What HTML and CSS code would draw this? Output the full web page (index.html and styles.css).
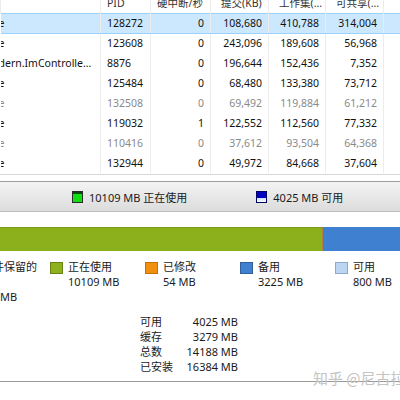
FILE: index.html
```html
<!DOCTYPE html>
<html>
	<head>
		<meta charset="UTF-8">
		<title>资源监视器 - 内存</title>
		<link rel="stylesheet" href="styles.css">
	</head>
	<body>
		<div class="procs">
			<table class="grid">
				<colgroup>
					<col class="c-name"><col class="c-pid"><col class="c-irq"><col class="c-commit"><col class="c-ws"><col class="c-share"><col>
				</colgroup>
				<thead>
					<tr><th></th><th class="l">PID</th><th class="l">硬中断/秒</th><th>提交(KB)</th><th>工作集(...</th><th>可共享(...</th><th></th></tr>
				</thead>
				<tbody>
					<tr class="sel"><td class="name">e</td><td class="l">128272</td><td>0</td><td>108,680</td><td>410,788</td><td>314,004</td><td></td></tr>
					<tr><td class="name">e</td><td class="l">123608</td><td>0</td><td>243,096</td><td>189,608</td><td>56,968</td><td></td></tr>
					<tr><td class="name long">dern.ImControlle...</td><td class="l">8876</td><td>0</td><td>196,644</td><td>152,436</td><td>7,352</td><td></td></tr>
					<tr><td class="name">e</td><td class="l">125484</td><td>0</td><td>68,480</td><td>133,380</td><td>73,712</td><td></td></tr>
					<tr class="dim"><td class="name">e</td><td class="l">132508</td><td>0</td><td>69,492</td><td>119,884</td><td>61,212</td><td></td></tr>
					<tr><td class="name">e</td><td class="l">119032</td><td>1</td><td>122,552</td><td>112,560</td><td>77,332</td><td></td></tr>
					<tr class="dim"><td class="name">e</td><td class="l">110416</td><td>0</td><td>37,612</td><td>93,504</td><td>64,368</td><td></td></tr>
					<tr><td class="name">e</td><td class="l">132944</td><td>0</td><td>49,972</td><td>84,668</td><td>37,604</td><td></td></tr>
				</tbody>
			</table>
		</div>

		<div class="band">
			<span class="key"><i class="ico ico-used"></i>10109 MB 正在使用</span>
			<span class="key key-free"><i class="ico ico-free"></i>4025 MB 可用</span>
		</div>

		<div class="bar">
			<div class="seg seg-used" style="width: 322px"></div>
			<div class="seg seg-mod" style="width: 1px"></div>
			<div class="seg seg-standby"></div>
		</div>

		<div class="legend">
			<div class="item item-hw">
				<span class="lbl">硬件保留的</span>
				<span class="blank">&nbsp;</span>
				<span class="val">MB</span>
			</div>
			<div class="item"><i class="sq sq-used"></i><div><div>正在使用</div><div>10109 MB</div></div></div>
			<div class="item"><i class="sq sq-mod"></i><div><div>已修改</div><div>54 MB</div></div></div>
			<div class="item"><i class="sq sq-standby"></i><div><div>备用</div><div>3225 MB</div></div></div>
			<div class="item"><i class="sq sq-free"></i><div><div>可用</div><div>800 MB</div></div></div>
		</div>

		<div class="stats">
			<span>可用</span><span class="num">4025 MB</span>
			<span>缓存</span><span class="num">3279 MB</span>
			<span>总数</span><span class="num">14188 MB</span>
			<span>已安装</span><span class="num">16384 MB</span>
		</div>

		<div class="rule"></div>
		<div class="mark">知乎 @尼古拉斯</div>
	</body>
</html>
```

FILE: styles.css
```css
body {
	margin: 0;
	width: 400px;
	height: 400px;
	overflow: hidden;
	position: relative;
	background: #fff;
	color: #111;
	font-family: "Noto Sans", "Noto Sans CJK SC", sans-serif;
	font-size: 11px;
}
.procs {
	height: 174px;
	overflow: hidden;
	border-bottom: 1px solid #d8d8d8;
}
.grid {
	border-collapse: collapse;
	table-layout: fixed;
	width: 400px;
	margin-top: -7px;
	font-size: 10.5px;
}
.c-name { width: 100px; }
.c-pid { width: 50px; }
.c-irq { width: 60px; }
.c-commit { width: 58px; }
.c-ws { width: 57px; }
.c-share { width: 58px; }
.grid th, .grid td {
	height: 20px;
	padding: 0 6px 0 0;
	box-sizing: border-box;
	text-align: right;
	white-space: nowrap;
	overflow: hidden;
	border-left: 1px solid #ececec;
	font-weight: normal;
	line-height: 18px;
}
.grid th {
	color: #333;
	text-align: left;
	padding-left: 10px;
}
.grid th.l { padding-left: 6px; }
.grid td.l {
	text-align: left;
	padding-left: 6px;
}
.grid td.name {
	border-left: none;
	text-align: left;
	padding: 0;
	text-indent: -2px;
}
.grid tr.sel td {
	background: #cce8ff;
	border-top: 1px solid #99d1ff;
	border-bottom: 1px solid #99d1ff;
}
.grid tr.dim td { color: #8a8a8a; }

.band {
	margin-top: 6px;
	height: 29px;
	border-top: 1px solid #9c9c9c;
	border-bottom: 1px solid #bdbdbd;
	background: linear-gradient(#f3f3f3, #dcdcdc);
	display: flex;
	align-items: center;
	font-size: 11px;
	color: #1a1a1a;
}
.key {
	display: flex;
	align-items: center;
	margin-left: 72px;
}
.key-free { margin-left: 69px; }
.ico {
	display: block;
	width: 9px;
	height: 10px;
	margin-right: 6px;
	border: 1px solid #2a2a2a;
}
.ico-used { background: linear-gradient(#0a4a0a 0 2px, #10e010 2px); }
.ico-free {
	border-color: #000060;
	background: linear-gradient(#0000c0 0 6px, #c8dcff 6px, #ffffff);
}

.bar {
	margin-top: 15px;
	height: 24px;
	display: flex;
}
.seg { height: 100%; }
.seg-used { background: #8cb01b; border-top: 1px solid #7a9a12; box-sizing: border-box; }
.seg-mod { background: #b08040; }
.seg-standby { flex: 1; background: #3f80d0; }

.legend {
	margin-top: 8px;
	display: grid;
	grid-template-columns: 50px repeat(4, 95px);
	line-height: 15px;
	font-size: 11px;
	color: #1a1a1a;
}
.item {
	display: flex;
	align-items: flex-start;
}
.item-hw {
	flex-direction: column;
	white-space: nowrap;
}
.item-hw .lbl { margin-left: -18px; }
.sq {
	display: block;
	width: 11px;
	height: 10px;
	margin: 3px 5px 0 0;
	border: 1px solid rgba(0, 0, 0, 0.25);
}
.sq-used { background: #8cb11c; }
.sq-mod { background: #f0900c; border-color: #c87000; }
.sq-standby { background: #3f80d0; }
.sq-free { background: #bcd5f2; border-color: #8ea8c8; }

.stats {
	margin: 10px 0 0 140px;
	display: grid;
	grid-template-columns: 46px 52px;
	line-height: 15px;
	font-size: 11px;
	color: #1a1a1a;
}
.stats .num { text-align: right; }

.rule {
	margin-top: 7px;
	border-top: 1px solid #9a9a9a;
}
.mark {
	position: absolute;
	left: 313px;
	top: 367px;
	font-size: 15px;
	white-space: nowrap;
	color: #c4c4c4;
	font-family: "Noto Sans CJK SC", sans-serif;
}
```
